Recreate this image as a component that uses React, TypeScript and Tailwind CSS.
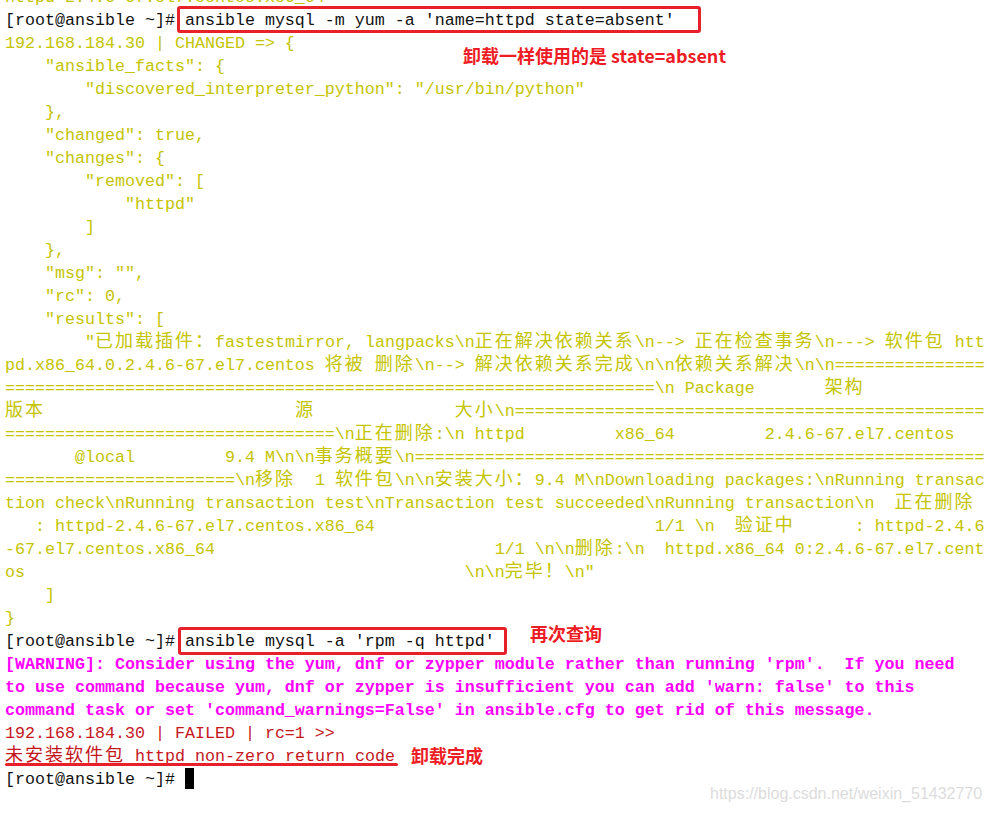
import React from "react";

const sp = (n: number) => " ".repeat(n);
const eq = (n: number) => "=".repeat(n);

// terminal cells are 10px wide; CJK glyphs take two cells
const Txt: React.FC<{ s: string }> = ({ s }) => {
  const parts = s.split(/([\u2E80-\u9FFF\uFF00-\uFFEF]+)/);
  return (
    <>
      {parts.map((p, i) =>
        i % 2 === 1 ? (
          <span
            key={i}
            className="font-['Noto_Sans_CJK_SC',sans-serif] text-[18px] tracking-[2px] leading-[0]"
          >
            {p}
          </span>
        ) : (
          <React.Fragment key={i}>{p}</React.Fragment>
        )
      )}
    </>
  );
};

type Line = { s: string; c: string; b?: boolean };

const Y = "text-[#c4c400]";
const K = "text-[#111111]";
const M = "text-[#ff00ff]";
const R = "text-[#c4161c]";

const lines: Line[] = [
  { s: "httpd-2.4.6-67.el7.centos.x86_64", c: Y },
  { s: "[root@ansible ~]# ansible mysql -m yum -a 'name=httpd state=absent'", c: K },
  { s: "192.168.184.30 | CHANGED => {", c: Y },
  { s: '    "ansible_facts": {', c: Y },
  { s: '        "discovered_interpreter_python": "/usr/bin/python"', c: Y },
  { s: "    },", c: Y },
  { s: '    "changed": true,', c: Y },
  { s: '    "changes": {', c: Y },
  { s: '        "removed": [', c: Y },
  { s: '            "httpd"', c: Y },
  { s: "        ]", c: Y },
  { s: "    },", c: Y },
  { s: '    "msg": "",', c: Y },
  { s: '    "rc": 0,', c: Y },
  { s: '    "results": [', c: Y },
  { s: String.raw`        "已加载插件：fastestmirror, langpacks\n正在解决依赖关系\n--> 正在检查事务\n---> 软件包 htt`, c: Y },
  { s: String.raw`pd.x86_64.0.2.4.6-67.el7.centos 将被 删除\n--> 解决依赖关系完成\n\n依赖关系解决\n\n` + eq(15), c: Y },
  { s: eq(65) + String.raw`\n Package` + sp(7) + "架构", c: Y },
  { s: "版本" + sp(25) + "源" + sp(14) + String.raw`大小\n` + eq(47), c: Y },
  { s: eq(33) + String.raw`\n正在删除:\n httpd` + sp(9) + "x86_64" + sp(9) + "2.4.6-67.el7.centos", c: Y },
  { s: sp(7) + "@local" + sp(9) + String.raw`9.4 M\n\n事务概要\n` + eq(57), c: Y },
  { s: eq(23) + String.raw`\n移除  1 软件包\n\n安装大小：9.4 M\nDownloading packages:\nRunning transac`, c: Y },
  { s: String.raw`tion check\nRunning transaction test\nTransaction test succeeded\nRunning transaction\n  正在删除`, c: Y },
  { s: sp(3) + ": httpd-2.4.6-67.el7.centos.x86_64" + sp(28) + String.raw`1/1 \n  验证中` + sp(6) + ": httpd-2.4.6", c: Y },
  { s: "-67.el7.centos.x86_64" + sp(28) + String.raw`1/1 \n\n删除:\n  httpd.x86_64 0:2.4.6-67.el7.cent`, c: Y },
  { s: "os" + sp(44) + String.raw`\n\n完毕！\n"`, c: Y },
  { s: "    ]", c: Y },
  { s: "}", c: Y },
  { s: "[root@ansible ~]# ansible mysql -a 'rpm -q httpd'", c: K },
  { s: "[WARNING]: Consider using the yum, dnf or zypper module rather than running 'rpm'.  If you need", c: M, b: true },
  { s: "to use command because yum, dnf or zypper is insufficient you can add 'warn: false' to this", c: M, b: true },
  { s: "command task or set 'command_warnings=False' in ansible.cfg to get rid of this message.", c: M, b: true },
  { s: "192.168.184.30 | FAILED | rc=1 >>", c: R },
  { s: "未安装软件包 httpd non-zero return code", c: R },
];

const note = "absolute font-['Noto_Sans_CJK_SC',sans-serif] font-bold text-[18px] leading-[20px] text-[#ee1c25]";

export default function App() {
  return (
    <div className="relative w-[991px] h-[814px] overflow-hidden bg-white">
      <div className="-mt-[14px] pl-[5px] font-['Liberation_Mono',monospace] text-[16.66px] leading-[23px]">
        {lines.map((l, i) => (
          <div key={i} className={`h-[23px] whitespace-pre ${l.c} ${l.b ? "font-bold" : ""}`}>
            <Txt s={l.s} />
          </div>
        ))}
        <div className="h-[23px] whitespace-pre text-[#111111]">
          {"[root@ansible ~]# "}
          <span className="inline-block w-[9px] h-[21px] bg-black align-[-5px]" />
        </div>
      </div>

      {/* annotations */}
      <div className="absolute left-[177px] top-[6px] w-[524px] h-[27px] border-[3px] border-[#e8202a] rounded-[3px]" />
      <div className="absolute left-[178px] top-[627px] w-[329px] h-[28px] border-[3px] border-[#e8202a] rounded-[3px]" />
      <div className="absolute left-[5px] top-[763px] w-[393px] h-[3px] rounded-full bg-[#e8202a]" />
      <div className={`${note} left-[463px] top-[45px] whitespace-pre`}>卸载一样使用的是 state=absent</div>
      <div className={`${note} left-[530px] top-[623px]`}>再次查询</div>
      <div className={`${note} left-[411px] top-[745px]`}>卸载完成</div>

      <div className="absolute left-[710px] top-[784px] font-['Liberation_Sans',sans-serif] text-[16px] leading-[20px] text-[#dcdcdc]">
        https://blog.csdn.net/weixin_51432770
      </div>
    </div>
  );
}
